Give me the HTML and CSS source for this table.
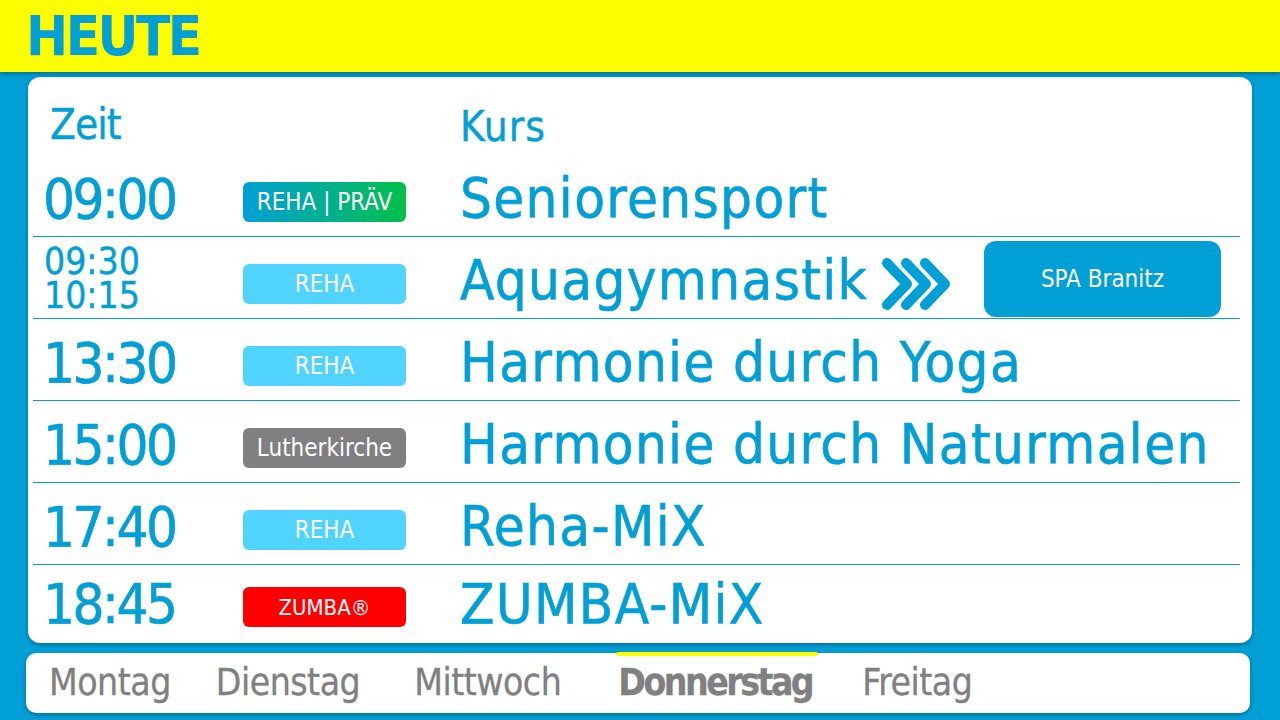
FILE: index.html
```html
<!DOCTYPE html>
<html lang="de">
<head>
<meta charset="utf-8">
<title>Heute</title>
<link rel="stylesheet" href="styles.css">
</head>
<body>
<header class="topbar"><h1 class="title">HEUTE</h1></header>
<main class="board">
  <div class="head"><span class="h-time">Zeit</span><span class="h-course">Kurs</span></div>
  <div class="row">
    <div class="time">09:00</div>
    <div class="badge badge-grad">REHA | PRÄV</div>
    <div class="course"><span class="name">Seniorensport</span></div>
  </div>
  <div class="row">
    <div class="time time-stack"><span class="t-line">09:30</span><span class="t-line">10:15</span></div>
    <div class="badge badge-light">REHA</div>
    <div class="course">
      <span class="name">Aquagymnastik</span>
      <svg class="chevrons" width="68" height="52" viewBox="0 0 68 52"><g fill="none" stroke="#009fd6" stroke-width="10" stroke-linecap="round" stroke-linejoin="round"><polyline points="5,5 25,26 5,47"/><polyline points="24,5 44,26 24,47"/><polyline points="43,5 63,26 43,47"/></g></svg>
      <div class="spa">SPA Branitz</div>
    </div>
  </div>
  <div class="row">
    <div class="time">13:30</div>
    <div class="badge badge-light">REHA</div>
    <div class="course"><span class="name">Harmonie durch Yoga</span></div>
  </div>
  <div class="row">
    <div class="time">15:00</div>
    <div class="badge badge-gray">Lutherkirche</div>
    <div class="course"><span class="name">Harmonie durch Naturmalen</span></div>
  </div>
  <div class="row">
    <div class="time">17:40</div>
    <div class="badge badge-light">REHA</div>
    <div class="course"><span class="name">Reha-MiX</span></div>
  </div>
  <div class="row row-last">
    <div class="time">18:45</div>
    <div class="badge badge-red">ZUMBA®</div>
    <div class="course"><span class="name">ZUMBA-MiX</span></div>
  </div>
</main>
<nav class="days">
  <span class="day day-mo">Montag</span>
  <span class="day day-di">Dienstag</span>
  <span class="day day-mi">Mittwoch</span>
  <span class="day day-do active">Donnerstag</span>
  <span class="day day-fr">Freitag</span>
</nav>
</body>
</html>
```
FILE: styles.css
```css
body {
  margin: 0;
  width: 1280px;
  height: 720px;
  overflow: hidden;
  background: #009fd6;
  font-family: "DejaVu Sans Condensed", "DejaVu Sans", sans-serif;
  font-stretch: condensed;
}

.topbar {
  position: relative;
  z-index: 1;
  height: 72px;
  background: #ffff00;
  box-shadow: 0 2px 4px rgba(0, 0, 0, 0.3);
  padding-left: 26px;
  display: flex;
  align-items: center;
}

.title {
  margin: 0;
  font-size: 56px;
  font-weight: 700;
  line-height: 1;
  letter-spacing: -2.5px;
  color: #009fd6;
}

.board {
  margin: 5px 28px 0;
  height: 566px;
  box-sizing: border-box;
  padding: 0 12px 0 5px;
  background: #fff;
  border-radius: 12px;
  overflow: hidden;
  box-shadow: 0 2px 4px rgba(0, 0, 0, 0.3);
}

.head {
  height: 78px;
  box-sizing: border-box;
  padding-top: 27px;
  display: grid;
  grid-template-columns: 427px 1fr;
  font-size: 42px;
  line-height: 42px;
  color: #009fd6;
  -webkit-text-stroke: 0.4px #009fd6;
}

.h-time {
  padding-left: 17px;
  letter-spacing: -1px;
}

.h-course {
  padding-top: 2px;
  letter-spacing: 1px;
}

.row {
  display: grid;
  grid-template-columns: 210px 163px 1fr;
  align-items: center;
  height: 82px;
  box-sizing: border-box;
  padding-top: 12px;
  border-bottom: 1px solid #009fd6;
}

.row-last {
  border-bottom: none;
  height: 78px;
  padding-top: 6px;
}

.time {
  padding-left: 10px;
  padding-bottom: 6px;
  font-size: 56px;
  line-height: 1;
  letter-spacing: -2.5px;
  color: #009fd6;
  -webkit-text-stroke: 0.6px #009fd6;
}

.time-stack {
  align-self: start;
  margin-top: -4px;
  padding-bottom: 0;
  display: flex;
  flex-direction: column;
  padding-left: 11px;
  font-size: 37px;
  letter-spacing: 0;
  -webkit-text-stroke: 0.4px #009fd6;
}

.t-line {
  height: 34px;
  line-height: 34px;
}

.badge {
  height: 40px;
  border-radius: 6px;
  color: #fff;
  font-size: 24px;
  display: flex;
  align-items: center;
  justify-content: center;
}

.badge-grad {
  background: linear-gradient(90deg, #009fd6, #00c04a);
}

.badge-light {
  background: #50d4ff;
}

.badge-gray {
  background: #808080;
}

.badge-red {
  background: #ff0000;
  font-size: 22px;
}

.course {
  padding-left: 54px;
  display: flex;
  align-items: center;
  white-space: nowrap;
  font-size: 56px;
  line-height: 1;
  color: #009fd6;
}

.name {
  padding-bottom: 7px;
  letter-spacing: 1.3px;
  -webkit-text-stroke: 0.6px #009fd6;
}

.chevrons {
  margin-left: 14px;
  flex: none;
}

.spa {
  margin-left: auto;
  margin-right: 19px;
  margin-top: -10px;
  width: 237px;
  height: 76px;
  border-radius: 12px;
  background: #009fd6;
  color: #fff;
  font-size: 24px;
  display: flex;
  align-items: center;
  justify-content: center;
}

.days {
  margin: 10px 30px 0 26px;
  height: 60px;
  box-sizing: border-box;
  padding-left: 23px;
  background: #fff;
  border-radius: 10px;
  box-shadow: 0 2px 4px rgba(0, 0, 0, 0.3);
  display: flex;
  gap: 48px;
}

.day {
  position: relative;
  height: 60px;
  box-sizing: border-box;
  padding-top: 1px;
  font-size: 37px;
  line-height: 58px;
  letter-spacing: -0.5px;
  color: #808080;
  -webkit-text-stroke: 0.3px #808080;
}

.day-di {
  margin-left: -3px;
}

.day-mi {
  margin-left: 6px;
}

.day-do {
  margin-left: 9px;
}

.day-fr {
  margin-left: 2px;
}

.day.active {
  font-weight: 700;
  letter-spacing: -2.5px;
}

.day.active::before {
  content: "";
  position: absolute;
  left: -2px;
  right: -6px;
  top: -1px;
  height: 4px;
  border-radius: 2px;
  background: #ffff00;
}
```
